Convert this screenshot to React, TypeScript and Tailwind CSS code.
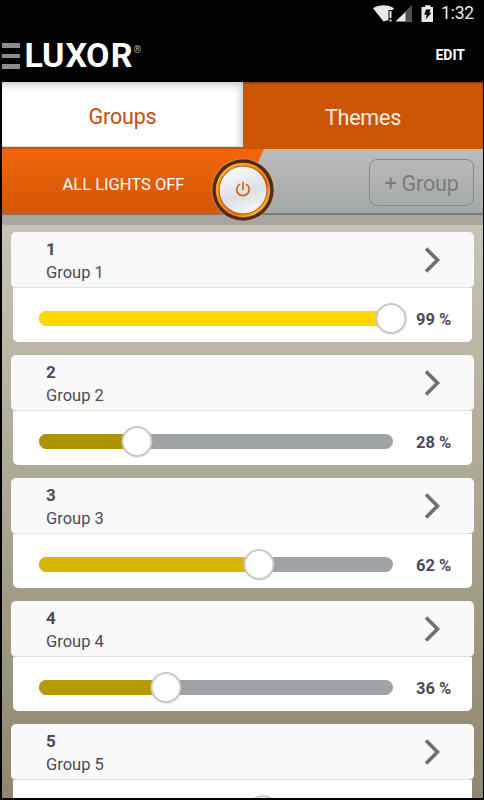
"use client";

import { useState } from "react";
import { clsx } from "clsx";

interface LightGroup {
  id: number;
  name: string;
  level: number;
  fill: string;
}

const groups: LightGroup[] = [
  { id: 1, name: "Group 1", level: 99, fill: "bg-[#fed800]" },
  { id: 2, name: "Group 2", level: 28, fill: "bg-[#ad9400]" },
  { id: 3, name: "Group 3", level: 62, fill: "bg-[#d5b601]" },
  { id: 4, name: "Group 4", level: 36, fill: "bg-[#b69b00]" },
  { id: 5, name: "Group 5", level: 63, fill: "bg-[#d6b701]" },
];

const StatusBar = () => {
  return (
    <div className="flex h-[27px] items-center justify-end pr-[9px] text-[#e8e8e8]">
      <svg width="62" height="18" viewBox="0 0 62 18" className="mr-[6px]" fill="currentColor">
        {/* wifi */}
        <path d="M0 3.2C5.5-.9 15.500-.9 21 3.200L19.500 5H15.500v10L10.500 16.500Z" />
        <path d="M16.500 6h2v7h-2zM16.500 14.500h2v2h-2z" />
        {/* signal */}
        <path d="M39 .5V16.500H22.500Z" fill="#e8e8e8" />
        <path d="M32.500 6.800 39 .5V16.500h-6.500Z" fill="#505050" />
        {/* battery */}
        <path d="M52 .3h5.500v1.700h2.500v15H48.500V2H52Z" />
        <path d="M53 4.500h4.500L56.300 7.800h2.200L52.500 14.500l1.300-4.800h-2.600Z" fill="#000" />
      </svg>
      <span className="text-[17.500px] leading-none tracking-[-0.2px]">1:32</span>
    </div>
  );
};

const Header = () => {
  return (
    <header className="flex h-[55px] items-center justify-between bg-black pr-[18px] text-white">
      <div className="flex items-center">
        <button aria-label="Menu" className="flex flex-col gap-[6px] pt-[3px]">
          <span className="h-[4.500px] w-[18px] bg-[#8d8d90]" />
          <span className="h-[4.500px] w-[18px] bg-[#8d8d90]" />
          <span className="h-[4.500px] w-[18px] bg-[#8d8d90]" />
        </button>
        <svg width="126" height="50" viewBox="0 0 126 50" className="ml-1" fill="#fff">
          <text x="0.500 17.900 41.400 61.900 86.700" y="37" fontSize="34" fontWeight="700">
            LUXOR
          </text>
          <text x="109.500" y="22.500" fontSize="10" fontWeight="700" fill="#aaa">
            ®
          </text>
        </svg>
      </div>
      <button className="pt-[1px] text-[14px] font-bold">EDIT</button>
    </header>
  );
};

const PowerButton = () => {
  return (
    <svg width="64" height="64" viewBox="0 0 64 64">
      <defs>
        <linearGradient id="ring" x1="0" y1="0" x2="1" y2="1">
          <stop offset="0" stopColor="#ffb52e" />
          <stop offset="0.45" stopColor="#ff7a00" />
          <stop offset="0.65" stopColor="#e85d00" />
          <stop offset="0.85" stopColor="#ffae10" />
          <stop offset="1" stopColor="#ee7300" />
        </linearGradient>
        <linearGradient id="face" x1="0.2" y1="0" x2="0.6" y2="1">
          <stop offset="0" stopColor="#ffffff" />
          <stop offset="0.6" stopColor="#dbe0e5" />
          <stop offset="1" stopColor="#f6f7f8" />
        </linearGradient>
      </defs>
      <circle cx="32" cy="32" r="31.600" fill="#f0a080" opacity="0.6" />
      <circle cx="32" cy="32" r="30.700" fill="#48301f" />
      <circle cx="32" cy="32" r="27.200" fill="url(#ring)" />
      <circle cx="32" cy="32" r="26.300" fill="none" stroke="#ffd080" strokeWidth="0.700" opacity="0.6" />
      <circle cx="32" cy="32" r="24.200" fill="#a34a0c" />
      <circle cx="32" cy="32" r="23.500" fill="url(#face)" />
      <g fill="none" stroke="#d4622a" strokeWidth="1.700" strokeLinecap="round">
        <path d="M28.500 26.400a6.200 6.200 0 1 0 7 0" />
        <path d="M32 24.300v7" />
      </g>
    </svg>
  );
};

const GroupCard = ({ group }: { group: LightGroup }) => {
  // thumb centre, measured from the left end of the track
  const position = group.level * 3.58 - 2;

  return (
    <section className="h-[110px] shrink-0">
      <div className="relative flex h-14 items-center justify-between rounded-[5px] border-b border-[#e4e3dc] bg-[#f9f9f9] pr-[33px] pl-[35px] text-[#4c4a5c]">
        <div className="pt-[4px]">
          <h2 className="text-[17px] leading-[22px] font-bold">{group.id}</h2>
          <p className="pt-px text-[16.500px] leading-[24px]">{group.name}</p>
        </div>
        <svg width="17" height="28" viewBox="0 0 17 28" fill="none" stroke="#707070" strokeWidth="3.600">
          <path d="M2 2.500 13.500 14 2 25.500" />
        </svg>
      </div>
      <div className="mx-[2px] flex h-[54px] items-center rounded-b-[5px] bg-white pt-[7px] pl-[26px]">
        <div className="relative h-[15px] w-[354px] rounded-full bg-[#9ea3a7]">
          <div className={clsx("h-full rounded-full", group.fill)} style={{ width: position }} />
          <span
            className="absolute top-[-8px] size-[31px] -translate-x-1/2 rounded-full border-2 border-[#c9c9c9] bg-white shadow-[1px_1px_1px_#0001]"
            style={{ left: position }}
          />
        </div>
        <span className="ml-[23px] pt-[3px] text-[16.500px] font-bold text-[#4c4a5c]">{group.level} %</span>
      </div>
    </section>
  );
};

const App = () => {
  const [tab, setTab] = useState("groups");

  return (
    <div className="h-[800px] w-[484px] overflow-hidden bg-black pr-px pb-[2px] pl-[2px] font-['Roboto',sans-serif]">
      <StatusBar />
      <Header />

      <nav className="flex h-[67px] bg-[#cc5606] text-[21.500px] tracking-[-0.2px] shadow-[inset_0_1px_2px_#0006]">
        <button
          className="h-[65px] w-[241px] border-b border-[#ddd] bg-white pt-[7px] text-[#cc4a08] shadow-[inset_-3px_4px_8px_-2px_#0004]"
          aria-pressed={tab === "groups"}
          onClick={() => setTab("groups")}
        >
          Groups
        </button>
        <button
          className="flex-1 pt-[5px] text-[#fbeee6]"
          aria-pressed={tab === "themes"}
          onClick={() => setTab("themes")}
        >
          Themes
        </button>
      </nav>

      <div className="relative flex h-[66px] justify-between border-b-2 border-[#7b7976] bg-linear-to-b from-[#bbbdbc] to-[#a5a8a8]">
        <button className="w-[262px] bg-linear-to-b from-[#f1660b] to-[#d45607] pt-[9px] pr-[19px] text-[16.500px] text-white [clip-path:polygon(0_0,100%_0,89%_100%,0_100%)]">
          ALL LIGHTS OFF
        </button>
        <button className="mt-[10px] mr-[9px] h-[47px] w-[105px] rounded-lg border border-[#888a8a] pt-[4px] text-[21.500px] tracking-[-0.2px] text-[#7a7c7c]">
          + Group
        </button>
        <button aria-label="Power" className="absolute top-[9px] left-[208.500px]">
          <PowerButton />
        </button>
      </div>
      <div className="h-[10px] bg-[#a8a49e]" />

      <main className="flex h-[573px] flex-col gap-[13px] overflow-hidden bg-linear-to-b from-[#c7c4b7] to-[#8f876d] px-[9px] pt-[7px]">
        {groups.map((group) => (
          <GroupCard key={group.id} group={group} />
        ))}
      </main>
    </div>
  );
};

export default App;
